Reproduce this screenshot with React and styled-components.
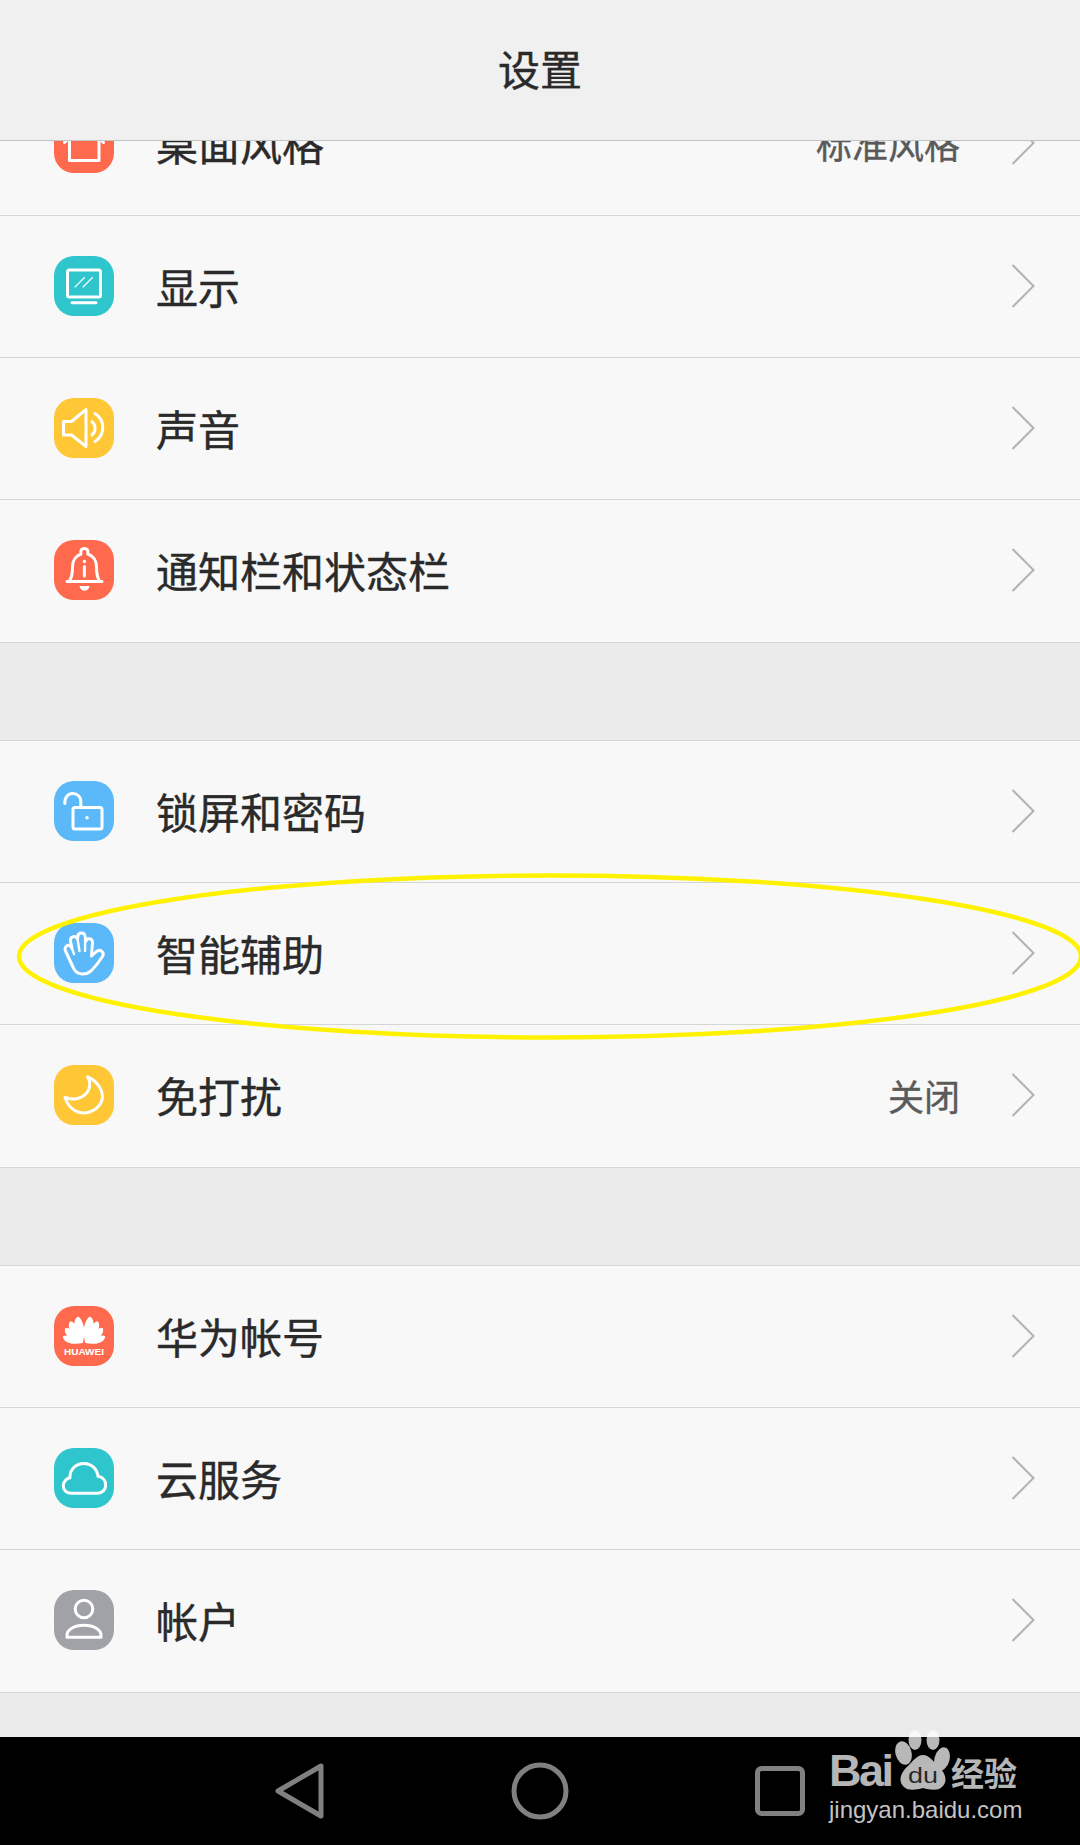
import React from 'react';
import styled, { createGlobalStyle } from 'styled-components';

const GlobalStyle = createGlobalStyle`
  html, body {
    margin: 0;
    padding: 0;
    background: #000;
  }
  body {
    font-family: "Noto Sans CJK SC", "Liberation Sans", sans-serif;
  }
`;

const Screen = styled.div`
  position: relative;
  width: 1080px;
  height: 1845px;
  display: flex;
  flex-direction: column;
  overflow: hidden;
  background: #ebebeb;
`;

const Header = styled.header`
  flex: none;
  height: 141px;
  box-sizing: border-box;
  padding-bottom: 5px;
  display: flex;
  align-items: center;
  justify-content: center;
  background: #f0f0f0;
  border-bottom: 1px solid #c2c2c2;
  font-size: 42px;
  -webkit-text-stroke: 0.4px #2a2a2a;
  color: #2a2a2a;
`;

const Viewport = styled.main`
  flex: 1;
  min-height: 0;
  overflow: hidden;
`;

const List = styled.div`
  margin-top: -67.6px;
  display: flex;
  flex-direction: column;
  gap: 97px;
`;

const Section = styled.section`
  background: #f8f8f8;
  border-top: ${(p) => (p.$first ? 'none' : '1px solid #d6d6d6')};
`;

const Row = styled.div`
  height: 142.33px;
  box-sizing: border-box;
  display: flex;
  align-items: center;
  padding: 0 45px 1.4px 54px;
  border-bottom: 1px solid #d6d6d6;
`;

const IconBox = styled.div`
  flex: none;
  width: 60px;
  height: 60px;
  border-radius: 20px;
  background: ${(p) => p.$color};
  svg {
    display: block;
  }
`;

const Label = styled.span`
  margin-left: 42px;
  font-size: 42px;
  -webkit-text-stroke: 0.4px #2a2a2a;
  line-height: 60px;
  color: #2a2a2a;
`;

const Value = styled.span`
  margin-left: auto;
  font-size: 36px;
  -webkit-text-stroke: 0.4px #5a5a5a;
  line-height: 60px;
  color: #5a5a5a;
`;

const ChevronWrap = styled.svg`
  flex: none;
  width: 24px;
  height: 44px;
  margin-left: ${(p) => (p.$afterValue ? '51px' : 'auto')};
`;

const NavBar = styled.nav`
  flex: none;
  height: 108px;
  background: #000;
  display: flex;
  align-items: center;
  padding-left: 274px;
`;

const NavIcon = styled.svg`
  flex: none;
  display: block;
  margin-left: ${(p) => p.$gap}px;
`;

const Ring = styled.svg`
  position: absolute;
  left: 0;
  top: 860px;
  pointer-events: none;
`;

const Watermark = styled.div`
  position: absolute;
  left: 829px;
  top: 1726px;
  width: 200px;
  color: #b6b6b6;
  pointer-events: none;
`;

const BrandRow = styled.div`
  display: flex;
  align-items: flex-end;
  height: 66px;
`;

const BrandLatin = styled.span`
  flex: none;
  width: 66px;
  font-family: "Liberation Sans", sans-serif;
  font-weight: 700;
  font-size: 45px;
  line-height: 42px;
  letter-spacing: -2.5px;
`;

const BrandCjk = styled.span`
  font-size: 33px;
  line-height: 40px;
  font-weight: 700;
  white-space: nowrap;
`;

const Domain = styled.div`
  font-family: "Liberation Sans", sans-serif;
  font-size: 24px;
  line-height: 28px;
  margin-top: 4px;
  white-space: nowrap;
  color: #c4c4c4;
`;

const line = { fill: 'none', stroke: '#fff', strokeWidth: 3, strokeLinecap: 'round', strokeLinejoin: 'round' };

const Glyph = ({ children }) => (
  <svg width="60" height="60" viewBox="0 0 60 60">{children}</svg>
);

const HomeIcon = () => (
  <Glyph>
    <path {...line} strokeLinecap="butt" d="M15.5 27V47.5H45V27" />
    <path {...line} d="M10.5 29.5L30 11L49.5 29.5" />
  </Glyph>
);

const DisplayIcon = () => (
  <Glyph>
    <rect {...line} x="13.5" y="14" width="33" height="27" rx="2" />
    <path {...line} d="M18 46.8H42" />
    <path {...line} strokeWidth="1.1" d="M21 31L30.5 21.5M29 31L38.5 21.5" />
  </Glyph>
);

const SoundIcon = () => (
  <Glyph>
    <path {...line} d="M9.5 23.5H17.5L32 11.5V48.5L17.5 37H9.5Z" />
    <path {...line} d="M38 23.5A9 9 0 0 1 38 37" />
    <path {...line} d="M41 15.5A16.5 16.5 0 0 1 41 43.5" />
  </Glyph>
);

const BellIcon = () => (
  <Glyph>
    <path {...line} d="M13 41.5H48M15.5 41C18 37 18.5 32 18.5 27C18.5 20 22.5 15.5 27 14C26 10 28 8.5 30.3 8.5C32.8 8.5 34.8 10 33.8 14C38.5 15.5 42.5 20 42.5 27C42.5 32 43 37 45.5 41" />
    <path d="M25.5 46H35.5C35 49 33 50.8 30.5 50.8C28 50.8 26 49 25.5 46Z" fill="#fff" />
    <circle cx="30.4" cy="21.5" r="1.7" fill="#fff" />
    <path {...line} d="M30.4 26.5V36" />
  </Glyph>
);

const LockIcon = () => (
  <Glyph>
    <rect {...line} x="19" y="26.5" width="29" height="21.5" rx="2" />
    <path {...line} d="M10.8 22.5C10.5 16.5 14 12.5 18.8 12.5C23.5 12.5 26.8 16 26.8 20.5V26" />
    <circle cx="33" cy="36.8" r="1.8" fill="#fff" />
  </Glyph>
);

const HandIcon = () => (
  <Glyph>
    <path {...line} d="M19 44L11.5 28C10 24 13.5 21 16.5 23L18 25.5L16.5 18C16 13 22 12 23.5 16L24 13C24 9 30.5 9 31 13L32 18C33 14.5 38.5 15 38.5 19.5L37.5 33L42.5 28.5C46 25.5 51 29.5 48.5 33.5C45 39 41 44 37 48C31 53 22 52 19 44Z" />
    <path {...line} strokeWidth="2.4" d="M18 25.5L20 31M23.5 16L25.5 28M31.2 15L31 28" />
  </Glyph>
);

const MoonIcon = () => (
  <Glyph>
    <path {...line} d="M33.5 12C44 16 50 27 48 35C45 45 33 50 24 47C18 45 13 39 11 32.5C20 36 30 33 34 26C37 21 36 15 33.5 12Z" />
  </Glyph>
);

const petals = [
  [10, 27], [30, 25], [50, 23], [72, 21],
];

const petalPath = 'M0 0C-4 -7 -6 -14 -5 -20C-4.5 -24 -2 -26.5 0 -27C2.5 -25 4 -20 3.8 -14C3.6 -8 1.5 -4 0 0Z';

const HuaweiIcon = () => (
  <Glyph>
    {petals.map(([angle, len]) => (
      <React.Fragment key={angle}>
        <path
          fill="#fff"
          transform={`translate(28.8 37) rotate(${-angle}) scale(${len / 27})`}
          d={petalPath}
        />
        <path
          fill="#fff"
          transform={`translate(31.2 37) scale(-1 1) rotate(${-angle}) scale(${len / 27})`}
          d={petalPath}
        />
      </React.Fragment>
    ))}
    <text
      x="30"
      y="48.7"
      fill="#fff"
      fontFamily="Liberation Sans, sans-serif"
      fontWeight="700"
      fontSize="8.4"
      textAnchor="middle"
      textLength="40"
      lengthAdjust="spacingAndGlyphs"
    >
      HUAWEI
    </text>
  </Glyph>
);

const CloudIcon = () => (
  <Glyph>
    <path {...line} d="M17 45.2C12 45.2 9.3 41.5 9.3 38C9.3 33.5 12.5 30.3 16 29.8C15.5 21.5 22 15.5 30 15.5C37 15.5 43 20.5 44 28.3C49 29 51.7 33 51.7 37.3C51.7 41.8 48 45.2 44 45.2Z" />
  </Glyph>
);

const UserIcon = () => (
  <Glyph>
    <circle {...line} cx="30" cy="19" r="8.8" />
    <path {...line} d="M13 47.3V45C13 40 20 35.2 30 35.2C40 35.2 47 40 47 45V47.3Z" />
  </Glyph>
);

const Chevron = ({ afterValue }) => (
  <ChevronWrap $afterValue={afterValue} viewBox="0 0 24 44">
    <path d="M1.5 1L22.5 22L1.5 43" fill="none" stroke="#b2b2b2" strokeWidth="2" />
  </ChevronWrap>
);

const sections = [
  [
    { label: '桌面风格', value: '标准风格', color: '#ff6a4e', Icon: HomeIcon },
    { label: '显示', color: '#2ec5cd', Icon: DisplayIcon },
    { label: '声音', color: '#ffc736', Icon: SoundIcon },
    { label: '通知栏和状态栏', color: '#ff6a4e', Icon: BellIcon },
  ],
  [
    { label: '锁屏和密码', color: '#5bb8f9', Icon: LockIcon },
    { label: '智能辅助', color: '#5bb8f9', Icon: HandIcon },
    { label: '免打扰', value: '关闭', color: '#ffc736', Icon: MoonIcon },
  ],
  [
    { label: '华为帐号', color: '#ff6a4e', Icon: HuaweiIcon },
    { label: '云服务', color: '#2ec5cd', Icon: CloudIcon },
    { label: '帐户', color: '#a1a2a8', Icon: UserIcon },
  ],
];

const Paw = () => (
  <svg width="56" height="66" viewBox="0 0 56 66" style={{ flex: 'none', display: 'block' }}>
    <g fill="#fff" opacity="0.72">
      <ellipse cx="20" cy="14" rx="6.5" ry="10" />
      <ellipse cx="38" cy="14" rx="6.5" ry="10" />
      <ellipse cx="8.5" cy="27" rx="8" ry="12" transform="rotate(-15 8.5 27)" />
      <ellipse cx="47" cy="33" rx="7.5" ry="12" transform="rotate(15 47 33)" />
      <path d="M28 29C34 29 38 35 43 40C51 47 53 56 47 61C43 65 35 64 28 62C21 64 13 65 9 61C3 56 5 47 13 40C18 35 22 29 28 29Z" />
    </g>
    <text
      x="28"
      y="57"
      fill="#000"
      fillOpacity="0.8"
      fontFamily="Liberation Sans, sans-serif"
      fontSize="22"
      textAnchor="middle"
      textLength="30"
      lengthAdjust="spacingAndGlyphs"
    >
      du
    </text>
  </svg>
);

export default function App() {
  return (
    <Screen>
      <GlobalStyle />
      <Header>设置</Header>
      <Viewport>
        <List>
          {sections.map((rows, i) => (
            <Section key={i} $first={i === 0}>
              {rows.map(({ label, value, color, Icon }) => (
                <Row key={label}>
                  <IconBox $color={color}><Icon /></IconBox>
                  <Label>{label}</Label>
                  {value && <Value>{value}</Value>}
                  <Chevron afterValue={!!value} />
                </Row>
              ))}
            </Section>
          ))}
        </List>
      </Viewport>
      <NavBar>
        <NavIcon width="50" height="58" viewBox="0 0 50 58" $gap={0}>
          <path d="M47 4L4 29L47 54Z" fill="none" stroke="#808080" strokeWidth="5" strokeLinejoin="round" />
        </NavIcon>
        <NavIcon width="58" height="58" viewBox="0 0 58 58" $gap={187}>
          <circle cx="29" cy="29" r="26" fill="none" stroke="#808080" strokeWidth="5" />
        </NavIcon>
        <NavIcon width="50" height="50" viewBox="0 0 50 50" $gap={186}>
          <rect x="2.5" y="2.5" width="45" height="45" rx="4" fill="none" stroke="#808080" strokeWidth="5" />
        </NavIcon>
      </NavBar>
      <Ring width="1080" height="200" viewBox="0 0 1080 200">
        <ellipse cx="550" cy="96.5" rx="531" ry="81" fill="none" stroke="#fff200" strokeWidth="4.5" />
      </Ring>
      <Watermark>
        <BrandRow>
          <BrandLatin>Bai</BrandLatin>
          <Paw />
          <BrandCjk>经验</BrandCjk>
        </BrandRow>
        <Domain>jingyan.baidu.com</Domain>
      </Watermark>
    </Screen>
  );
}
